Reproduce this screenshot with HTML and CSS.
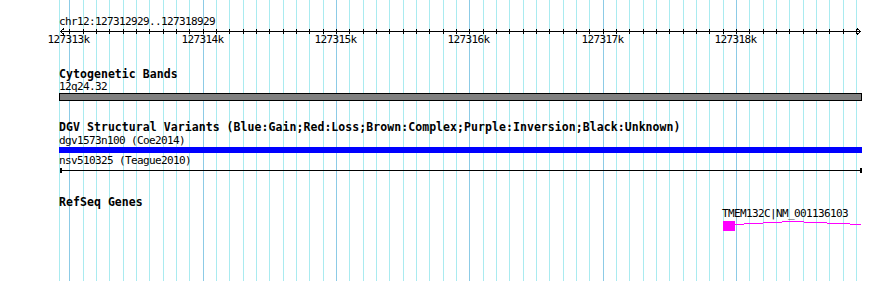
FILE: index.html
```html
<!DOCTYPE html>
<html>
<head>
<meta charset="utf-8">
<link rel="stylesheet" href="styles.css">
</head>
<body>
<div class="canvas">
  <svg class="grid" width="890" height="281" viewBox="0 0 890 281">
    <path class="grid-minor" d="M59.5 0V281M83.5 0V281M96.5 0V281M109.5 0V281M123.5 0V281M136.5 0V281M149.5 0V281M163.5 0V281M176.5 0V281M189.5 0V281M216.5 0V281M229.5 0V281M243.5 0V281M256.5 0V281M269.5 0V281M283.5 0V281M296.5 0V281M309.5 0V281M323.5 0V281M349.5 0V281M363.5 0V281M376.5 0V281M389.5 0V281M403.5 0V281M416.5 0V281M429.5 0V281M443.5 0V281M456.5 0V281M483.5 0V281M496.5 0V281M509.5 0V281M523.5 0V281M536.5 0V281M549.5 0V281M563.5 0V281M576.5 0V281M589.5 0V281M616.5 0V281M629.5 0V281M643.5 0V281M656.5 0V281M669.5 0V281M683.5 0V281M696.5 0V281M709.5 0V281M723.5 0V281M749.5 0V281M763.5 0V281M776.5 0V281M789.5 0V281M803.5 0V281M816.5 0V281M829.5 0V281M843.5 0V281M856.5 0V281"/>
    <path class="grid-major" d="M69.5 0V281M203.5 0V281M336.5 0V281M469.5 0V281M603.5 0V281M736.5 0V281"/>
  </svg>

  <div class="tracks">
    <div class="label ruler-title">chr12:127312929..127318929</div>
    <svg class="ruler" width="803" height="17" viewBox="0 0 803 17">
      <path class="ink" d="M1 3.5H801.5"/>
      <path class="ink" d="M10.5 1V6M24.5 1V6M37.5 1V6M50.5 1V6M64.5 1V6M77.5 1V6M90.5 1V6M104.5 1V6M117.5 1V6M130.5 1V6M144.5 1V6M157.5 1V6M170.5 1V6M184.5 1V6M197.5 1V6M210.5 1V6M224.5 1V6M237.5 1V6M250.5 1V6M264.5 1V6M277.5 1V6M290.5 1V6M304.5 1V6M317.5 1V6M330.5 1V6M344.5 1V6M357.5 1V6M370.5 1V6M384.5 1V6M397.5 1V6M410.5 1V6M424.5 1V6M437.5 1V6M450.5 1V6M464.5 1V6M477.5 1V6M490.5 1V6M504.5 1V6M517.5 1V6M530.5 1V6M544.5 1V6M557.5 1V6M570.5 1V6M584.5 1V6M597.5 1V6M610.5 1V6M624.5 1V6M637.5 1V6M650.5 1V6M664.5 1V6M677.5 1V6M690.5 1V6M704.5 1V6M717.5 1V6M730.5 1V6M744.5 1V6M757.5 1V6M770.5 1V6M784.5 1V6M797.5 1V6"/>
      <polyline class="ink" points="5,0.5 1.5,3.5 5,6.5"/>
      <polyline class="ink" points="798,0.5 801.5,3.5 798,6.5"/>
      <text class="tick-label" x="9.5" y="15">127313k</text>
      <text class="tick-label" x="143.5" y="15">127314k</text>
      <text class="tick-label" x="276.5" y="15">127315k</text>
      <text class="tick-label" x="409.5" y="15">127316k</text>
      <text class="tick-label" x="543.5" y="15">127317k</text>
      <text class="tick-label" x="676.5" y="15">127318k</text>
    </svg>

    <div class="title cyto-title">Cytogenetic Bands</div>
    <div class="label band-label">12q24.32</div>
    <div class="band"></div>

    <div class="title dgv-title">DGV Structural Variants (Blue:Gain;Red:Loss;Brown:Complex;Purple:Inversion;Black:Unknown)</div>
    <div class="label gap2">dgv1573n100 (Coe2014)</div>
    <div class="gain"></div>
    <div class="label gap2">nsv510325 (Teague2010)</div>
    <svg class="sv-line" width="803" height="5" viewBox="0 0 803 5">
      <path class="ink" d="M1 2.5H803"/>
      <rect x="1" y="0" width="2" height="5" fill="#000"/>
      <rect x="801" y="0" width="2" height="5" fill="#000"/>
    </svg>

    <div class="title refseq-title">RefSeq Genes</div>
    <div class="gene" style="margin-left:663px">
      <div class="label">TMEM132C|NM_001136103</div>
      <svg class="gene-glyph" width="160" height="10" viewBox="0 0 160 10">
        <rect x="1" y="0" width="12" height="10" fill="#ff00ff"/>
        <polyline class="intron" points="13,3.5 70,0.5 139,3.5"/>
      </svg>
    </div>
  </div>
</div>
</body>
</html>
```

FILE: styles.css
```css
body {
  margin: 0;
  background: #ffffff;
}

.canvas {
  position: relative;
  z-index: 0;
  width: 890px;
  height: 281px;
  overflow: hidden;
  background: #ffffff;
}

.grid {
  position: absolute;
  left: 0;
  top: 0;
  z-index: -1;
}

.grid-minor {
  stroke: #a9ebf0;
  stroke-width: 1;
  fill: none;
}

.grid-major {
  stroke: #8ccbe6;
  stroke-width: 1;
  fill: none;
}

.tracks {
  display: flex;
  flex-direction: column;
  align-items: flex-start;
  padding-left: 59px;
  padding-top: 16px;
  width: 803px;
}

.label {
  font-family: "DejaVu Sans Mono", monospace;
  font-size: 11px;
  line-height: 12px;
  letter-spacing: -0.62px;
  color: #000;
  white-space: nowrap;
}

.title {
  font-family: "DejaVu Sans Mono", monospace;
  font-weight: bold;
  font-size: 11.5px;
  line-height: 11px;
  letter-spacing: 0.06px;
  color: #000;
  white-space: nowrap;
}

.ink {
  stroke: #000;
  stroke-width: 1;
  fill: none;
  shape-rendering: crispEdges;
}

.ruler {
  display: block;
  overflow: visible;
}

.tick-label {
  font-family: "DejaVu Sans Mono", monospace;
  font-size: 11px;
  letter-spacing: -0.62px;
  fill: #000;
  text-anchor: middle;
}

.cyto-title {
  margin-top: 24px;
}

.band-label {
  margin-top: 1px;
  line-height: 11px;
}

.band {
  box-sizing: border-box;
  width: 803px;
  height: 8px;
  margin-top: 1px;
  border: 1px solid #000;
  background: #808080;
}

.dgv-title {
  margin-top: 21px;
}

.gap2 {
  margin-top: 2px;
}

.gain {
  width: 803px;
  height: 6px;
  background: #0000ff;
}

.sv-line {
  display: block;
  margin-top: 1px;
}

.refseq-title {
  margin-top: 24px;
}

.gene {
  display: flex;
  flex-direction: column;
}

.gene-glyph {
  display: block;
  margin-top: 1px;
}

.intron {
  stroke: #ff00ff;
  stroke-width: 1;
  fill: none;
  shape-rendering: crispEdges;
}
```
